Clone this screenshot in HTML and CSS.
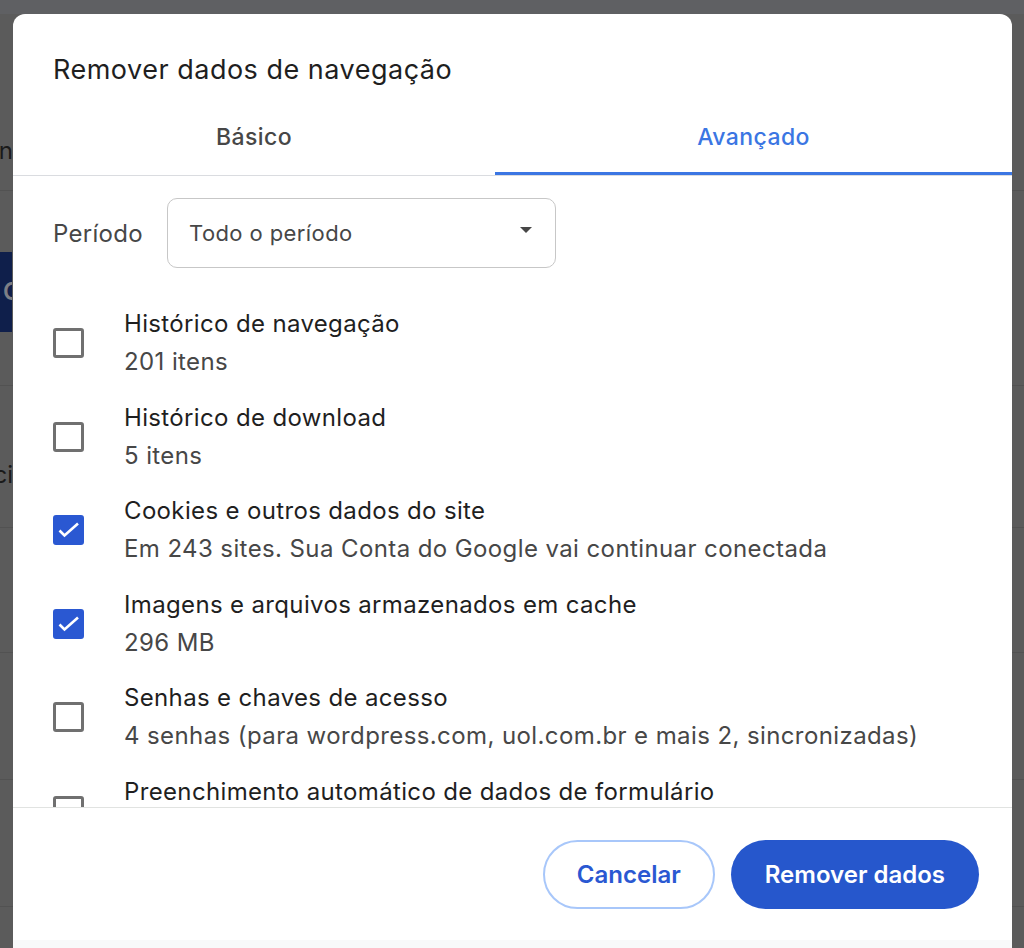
FILE: index.html
```html
<!DOCTYPE html>
<html lang="pt-BR">
<head>
	<meta charset="utf-8">
	<title>Remover dados de navegação</title>
	<link rel="stylesheet" href="styles.css">
</head>
<body>
	<!-- page behind the dialog, dimmed -->
	<div class="page">
		<div class="page-top"></div>
		<div class="page-row row-a"><span class="frag-left">Modern</span></div>
		<div class="page-row row-b"><span class="frag-right">Continuar</span></div>
		<div class="page-row row-c"><span class="frag-left">Ofici</span></div>
		<div class="page-row row-d"></div>
		<div class="page-row row-e"></div>
		<div class="page-row row-f"></div>
		<div class="page-row row-g"></div>
	</div>

	<div class="dialog">
		<div class="dialog-head">
			<h1 class="dialog-title">Remover dados de navegação</h1>
		</div>

		<div class="tabs">
			<div class="tab">Básico</div>
			<div class="tab active">Avançado</div>
		</div>

		<div class="dialog-body">
			<div class="period">
				<span class="period-label">Período</span>
				<div class="select">
					<span>Todo o período</span>
					<svg class="select-arrow" width="12" height="6" viewBox="0 0 12 6"><path d="M0 0h12L6 6z" fill="#474747"/></svg>
				</div>
			</div>

			<div class="item">
				<span class="box"></span>
				<div class="item-text">
					<div class="item-title">Histórico de navegação</div>
					<div class="item-sub">201 itens</div>
				</div>
			</div>
			<div class="item">
				<span class="box"></span>
				<div class="item-text">
					<div class="item-title">Histórico de download</div>
					<div class="item-sub">5 itens</div>
				</div>
			</div>
			<div class="item">
				<span class="box checked"><svg width="31" height="30" viewBox="0 0 31 30"><path d="M6.5 15.5l5 5L25 8.5" fill="none" stroke="#fff" stroke-width="2.6"/></svg></span>
				<div class="item-text">
					<div class="item-title">Cookies e outros dados do site</div>
					<div class="item-sub">Em 243 sites. Sua Conta do Google vai continuar conectada</div>
				</div>
			</div>
			<div class="item">
				<span class="box checked"><svg width="31" height="30" viewBox="0 0 31 30"><path d="M6.5 15.5l5 5L25 8.5" fill="none" stroke="#fff" stroke-width="2.6"/></svg></span>
				<div class="item-text">
					<div class="item-title">Imagens e arquivos armazenados em cache</div>
					<div class="item-sub">296 MB</div>
				</div>
			</div>
			<div class="item">
				<span class="box"></span>
				<div class="item-text">
					<div class="item-title">Senhas e chaves de acesso</div>
					<div class="item-sub">4 senhas (para wordpress.com, uol.com.br e mais 2, sincronizadas)</div>
				</div>
			</div>
			<div class="item">
				<span class="box"></span>
				<div class="item-text">
					<div class="item-title">Preenchimento automático de dados de formulário</div>
					<div class="item-sub">Mais de 100 sugestões</div>
				</div>
			</div>
		</div>

		<div class="dialog-foot">
			<button class="btn btn-cancel">Cancelar</button>
			<button class="btn btn-remove">Remover dados</button>
		</div>
		<div class="dialog-strip"></div>
	</div>
</body>
</html>
```

FILE: styles.css
```css
body{
	margin: 0;
	height: 948px;
	overflow: hidden;
	background: #5b5b5b;
	font-family: Inter, "Noto Sans", sans-serif;
	color: #1f1f1f;
}

/* dimmed page behind */
.page-top{
	height: 14px;
	background: #5f6063;
}

.page-row{
	display: flex;
	justify-content: space-between;
	align-items: center;
	border-bottom: 1px solid #525252;
}

.row-a{ height: 176px; align-items: flex-start; }
.row-b{ height: 194px; }
.row-c{ height: 141px; align-items: flex-start; }
.row-d{ height: 124px; }
.row-e{ height: 126px; }
.row-f{ height: 126px; }
.row-g{ height: 40px; border-bottom: none; }

.frag-left{
	width: 13px;
	overflow: hidden;
	direction: rtl;
	white-space: nowrap;
	font-size: 24px;
	color: #1a1a1a;
}

.row-a .frag-left{ margin-top: 122px; }
.row-c .frag-left{ margin-top: 74px; }

.frag-right{
	width: 9px;
	height: 80px;
	margin-top: 8px;
	padding-left: 3px;
	overflow: hidden;
	white-space: nowrap;
	background: #0f1f4b;
	color: #7d7f86;
	font-size: 24px;
	font-weight: 600;
	line-height: 80px;
}

/* dialog */
.dialog{
	position: fixed;
	left: 13px;
	top: 14px;
	width: 999px;
	bottom: 0;
	background: #fff;
	border-radius: 12px 12px 0 0;
	display: flex;
	flex-direction: column;
}

.dialog-head{
	padding: 40px 40px 0;
}

.dialog-title{
	margin: 0;
	font-size: 27px;
	font-weight: 400;
	line-height: 32px;
	letter-spacing: 0.5px;
	color: #1f1f1f;
}

.tabs{
	display: grid;
	grid-template-columns: 482px 1fr;
	margin-top: 16px;
	border-bottom: 1px solid #dadce0;
}

.tab{
	height: 70px;
	display: flex;
	align-items: center;
	justify-content: center;
	border-bottom: 3px solid transparent;
	font-size: 23px;
	font-weight: 500;
	letter-spacing: 0.4px;
	color: #474747;
}

.tab.active{
	color: #3b76e3;
	border-bottom-color: #3b76e3;
}

.dialog-body{
	flex: 1;
	overflow: hidden;
	padding: 22px 40px 0;
}

.period{
	display: flex;
	align-items: center;
	gap: 24px;
}

.period-label{
	width: 90px;
	font-size: 24px;
	letter-spacing: 0.3px;
	color: #474747;
}

.select{
	box-sizing: border-box;
	width: 389px;
	height: 70px;
	border: 1px solid #c7c7c7;
	border-radius: 10px;
	display: flex;
	align-items: center;
	justify-content: space-between;
	padding: 0 23px 0 21px;
	font-size: 22px;
	letter-spacing: 0.4px;
	color: #474747;
}

.select-arrow{
	margin-top: -6px;
}

.item{
	display: flex;
	align-items: center;
	gap: 40px;
	padding: 8.75px 0;
}

.period + .item{
	margin-top: 28.25px;
}

.box{
	width: 25px;
	height: 24px;
	border: 3px solid #707070;
	border-radius: 3px;
	flex-shrink: 0;
	position: relative;
}

.box.checked{
	border-color: #2a58d2;
	background: #2a58d2;
}

.box svg{
	position: absolute;
	left: -3px;
	top: -3px;
}

.item-title{
	font-size: 24px;
	line-height: 38px;
	letter-spacing: 0.35px;
	color: #1f1f1f;
	white-space: nowrap;
}

.item-sub{
	font-size: 24px;
	line-height: 38px;
	letter-spacing: 0.4px;
	color: #474747;
	white-space: nowrap;
}

.dialog-foot{
	border-top: 1px solid #e1e3e1;
	padding: 32px 33px 31px 0;
	display: flex;
	justify-content: flex-end;
	gap: 16px;
}

.btn{
	height: 69px;
	border-radius: 35px;
	font-family: Inter, "Noto Sans", sans-serif;
	font-size: 24px;
	font-weight: 600;
	padding: 0 32px;
	cursor: pointer;
}

.btn-cancel{
	background: #fff;
	border: 2px solid #a8c7fa;
	color: #2a58d2;
}

.btn-remove{
	background: #2657cc;
	border: none;
	padding: 0 34px;
	color: #fff;
}

.dialog-strip{
	height: 8px;
	background: #f8f9fa;
}
```
